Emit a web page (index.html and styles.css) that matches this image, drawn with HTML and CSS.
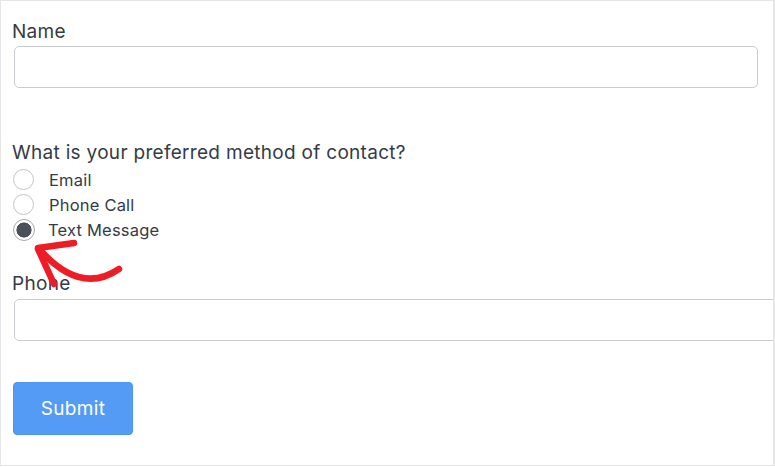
FILE: index.html
```html
<!DOCTYPE html>
<html lang="en">
<head>
<meta charset="utf-8">
<title>Contact form</title>
<link rel="stylesheet" href="styles.css">
</head>
<body>
<div class="frame">
  <form class="form">
    <label class="label label-name" for="name">Name</label>
    <input class="field field-name" id="name" type="text">

    <div class="question">What is your preferred method of contact?</div>
    <div class="options">
      <label class="option"><input class="radio" type="radio" name="method"><span>Email</span></label>
      <label class="option"><input class="radio" type="radio" name="method"><span>Phone Call</span></label>
      <label class="option"><input class="radio" type="radio" name="method" checked><span class="shift">Text Message</span></label>
    </div>

    <label class="label label-phone" for="phone">Phone</label>
    <input class="field field-phone" id="phone" type="text">

    <button class="submit" type="button">Submit</button>
  </form>
  <svg class="arrow" width="140" height="60" viewBox="0 0 140 60" aria-hidden="true">
    <g fill="none" stroke="#ee1c25" stroke-width="6.5" stroke-linecap="round" stroke-linejoin="round">
      <path d="M9 13 Q49 57 87 31"/>
      <path d="M6 10 L42 5"/>
      <path d="M6 11 L22 46"/>
    </g>
  </svg>
</div>
</body>
</html>
```
FILE: styles.css
```css
html, body {
  margin: 0;
  padding: 0;
  background: #ffffff;
}
body {
  font-family: Inter, "Noto Sans", "Liberation Sans", sans-serif;
  color: #353b46;
}
.frame {
  position: relative;
  box-sizing: border-box;
  width: 775px;
  height: 466px;
  border: 1px solid #e6e6e8;
  border-right-width: 2px;
  overflow: hidden;
}
.form {
  display: flex;
  flex-direction: column;
  align-items: flex-start;
  padding: 18px 0 0 11px;
}
.label, .question {
  display: block;
  font-size: 19px;
  letter-spacing: 0.3px;
  line-height: 22px;
  height: 22px;
}
.label-name { margin-top: 2px; }
.field {
  box-sizing: border-box;
  height: 42px;
  margin: 3px 0 0 2px;
  border: 1px solid #c9ccd1;
  border-radius: 5px;
  background: #fff;
  font: inherit;
  outline: none;
}
.field-name { width: 744px; }
.field-phone { width: 800px; margin-top: 4px; }
.question { margin-top: 54px; }
.options {
  display: flex;
  flex-direction: column;
  margin-top: 3px;
}
.option {
  display: flex;
  align-items: center;
  gap: 15px;
  height: 25px;
  font-size: 16.5px;
  letter-spacing: 0.2px;
  line-height: 20px;
}
.shift { margin-left: -1px; }
.radio {
  appearance: none;
  -webkit-appearance: none;
  box-sizing: border-box;
  width: 21px;
  height: 21px;
  margin: 0 0 0 1px;
  border: 1.5px solid #c2c3c6;
  border-radius: 50%;
  background: #fff;
}
.radio:checked {
  width: 22px;
  height: 22px;
  margin-left: 1px;
  margin-right: -1px;
  border: 1.5px solid #a8a9ad;
  background: radial-gradient(circle, #4b5059 0 7.3px, #ffffff 7.8px);
}
.label-phone { margin-top: 31px; }
.submit {
  margin: 41px 0 0 1px;
  width: 120px;
  height: 53px;
  border: 1px solid #4b95f3;
  border-radius: 4px;
  background: #549bf5;
  color: #ffffff;
  font: inherit;
  font-size: 19px;
  letter-spacing: 0.3px;
}
.arrow {
  position: absolute;
  left: 31px;
  top: 237px;
}
```
